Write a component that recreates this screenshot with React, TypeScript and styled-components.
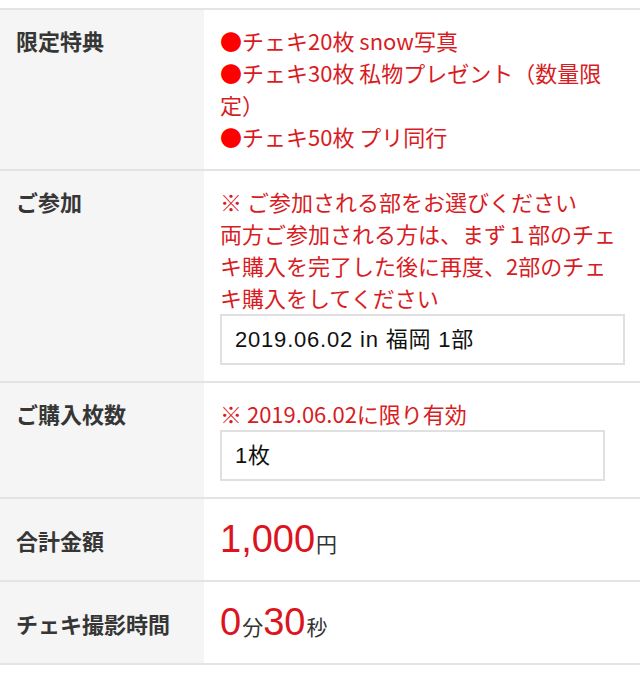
import React from "react";
import styled, { createGlobalStyle } from "styled-components";

const GlobalStyle = createGlobalStyle`
  html, body { margin: 0; padding: 0; background: #ffffff; }
  body { font-family: "Noto Sans CJK JP", "Liberation Sans", sans-serif; }
  * { box-sizing: border-box; }
`;

const Page = styled.div`
  padding-top: 8px;
`;

const Table = styled.div`
  display: flex;
  flex-direction: column;
  border-top: 2px solid #e4e4e4;
`;

const Row = styled.div`
  display: grid;
  grid-template-columns: 204px 1fr;
  border-bottom: 2px solid #e4e4e4;
`;

const Label = styled.div<{ $center?: boolean }>`
  display: flex;
  align-items: ${(p) => (p.$center ? "center" : "flex-start")};
  background: #f5f5f5;
  padding: ${(p) => (p.$center ? "16px 10px 16px 16px" : "14px 10px 16px 16px")};
  font-family: "Noto Sans CJK JP", sans-serif;
  font-size: 22px;
  font-weight: 700;
  line-height: 32px;
  color: #363636;
`;

const Value = styled.div<{ $center?: boolean }>`
  display: flex;
  flex-direction: column;
  justify-content: ${(p) => (p.$center ? "center" : "flex-start")};
  padding: ${(p) => (p.$center ? "16px 15px 16px 16px" : "14px 15px 16px 16px")};
  background: #ffffff;
`;

const Note = styled.p`
  margin: 0;
  font-family: "Noto Sans CJK JP", sans-serif;
  font-size: 22px;
  line-height: 32px;
  color: #d81c24;
  &:last-child {
    margin-bottom: 1px;
  }
`;

const Bullet = styled.span`
  display: inline-block;
  line-height: 22px;
  color: #ff0000;
`;

const Select = styled.select<{ $width: string }>`
  display: block;
  width: ${(p) => p.$width};
  height: 51px;
  margin: 1px 0 0;
  padding: 0 0 0 13px;
  border: 2px solid #e0e0e0;
  border-radius: 0;
  background: #ffffff;
  appearance: none;
  -webkit-appearance: none;
  font-family: "Liberation Sans", "Noto Sans CJK JP", sans-serif;
  font-size: 22px;
  letter-spacing: 0.8px;
  color: #111111;
  outline: none;
`;

const Amount = styled.div`
  display: flex;
  align-items: baseline;
  height: 49px;
  line-height: 49px;
`;

const Big = styled.span`
  font-family: "Liberation Sans", sans-serif;
  font-size: 38px;
  font-weight: 400;
  color: #dc1420;
`;

const Unit = styled.span`
  font-family: "Noto Sans CJK JP", sans-serif;
  font-size: 21px;
  color: #333333;
  margin-left: 1px;
`;

export default function App() {
  return (
    <>
      <GlobalStyle />
      <Page>
        <Table>
          <Row>
            <Label>限定特典</Label>
            <Value>
              <Note>
                <Bullet>●</Bullet>チェキ20枚 snow写真
              </Note>
              <Note>
                <Bullet>●</Bullet>チェキ30枚 私物プレゼント（数量限定）
              </Note>
              <Note>
                <Bullet>●</Bullet>チェキ50枚 プリ同行
              </Note>
            </Value>
          </Row>
          <Row>
            <Label>ご参加</Label>
            <Value>
              <Note>※ ご参加される部をお選びください</Note>
              <Note>
                両方ご参加される方は、まず１部のチェキ購入を完了した後に再度、2部のチェキ購入をしてください
              </Note>
              <Select $width="100%" defaultValue="1">
                <option value="1">2019.06.02 in 福岡 1部</option>
              </Select>
            </Value>
          </Row>
          <Row>
            <Label>ご購入枚数</Label>
            <Value>
              <Note>※ 2019.06.02に限り有効</Note>
              <Select $width="385px" defaultValue="1">
                <option value="1">1枚</option>
              </Select>
            </Value>
          </Row>
          <Row>
            <Label $center>合計金額</Label>
            <Value $center>
              <Amount>
                <Big>1,000</Big>
                <Unit>円</Unit>
              </Amount>
            </Value>
          </Row>
          <Row>
            <Label $center>チェキ撮影時間</Label>
            <Value $center>
              <Amount>
                <Big>0</Big>
                <Unit>分</Unit>
                <Big>30</Big>
                <Unit>秒</Unit>
              </Amount>
            </Value>
          </Row>
        </Table>
      </Page>
    </>
  );
}
